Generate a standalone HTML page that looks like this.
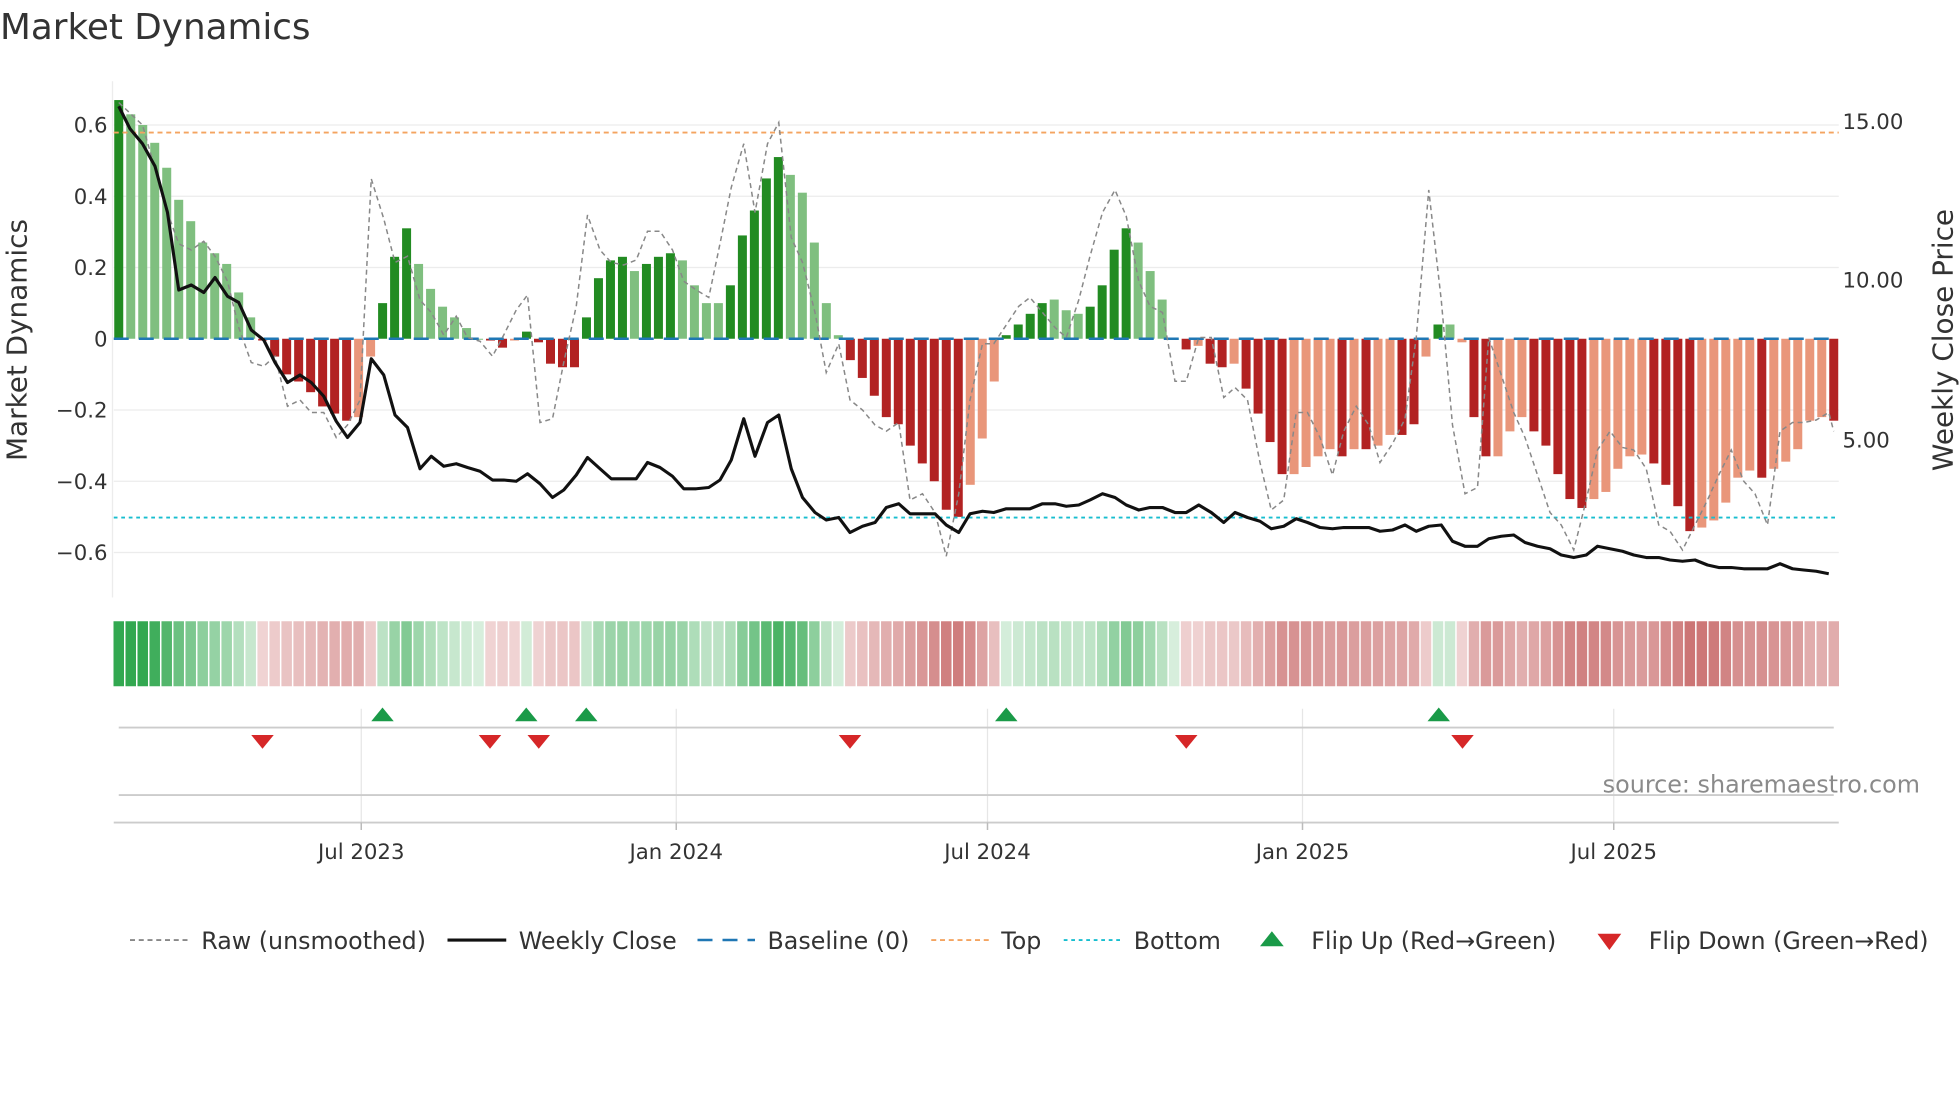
<!DOCTYPE html>
<html><head><meta charset="utf-8"><style>
html,body{margin:0;padding:0;background:#fff;}
svg{display:block;font-family:"DejaVu Sans","Liberation Sans",sans-serif;}
</style></head><body>
<svg id="s" width="1960" height="1102" viewBox="0 0 1568 881.6" xmlns="http://www.w3.org/2000/svg">
<rect width="1568" height="882" fill="#fff"/>
<text x="0" y="31" font-size="28.6" fill="#333">Market Dynamics</text>
<g stroke="#ececec" stroke-width="1">
<line x1="91" y1="100" x2="1471" y2="100"/><line x1="91" y1="157" x2="1471" y2="157"/>
<line x1="91" y1="214" x2="1471" y2="214"/><line x1="91" y1="328" x2="1471" y2="328"/>
<line x1="91" y1="385" x2="1471" y2="385"/><line x1="91" y1="442" x2="1471" y2="442"/>
<line x1="90" y1="65" x2="90" y2="478"/>
</g>
<g font-size="17" fill="#333" text-anchor="end">
<text x="86" y="106">0.6</text><text x="86" y="163">0.4</text><text x="86" y="220">0.2</text>
<text x="86" y="277">0</text><text x="86" y="334">−0.2</text><text x="86" y="391">−0.4</text><text x="86" y="448">−0.6</text>
</g>
<g font-size="17" fill="#333">
<text x="1474" y="103">15.00</text><text x="1474" y="230">10.00</text><text x="1474" y="358">5.00</text>
</g>
<text transform="translate(21,272) rotate(-90)" font-size="22.3" fill="#333" text-anchor="middle">Market Dynamics</text>
<text transform="translate(1562,272) rotate(-90)" font-size="22.3" fill="#333" text-anchor="middle">Weekly Close Price</text>
<g id="bars"></g>
<line x1="91" y1="271" x2="1471" y2="271" stroke="#1f77b4" stroke-width="2" stroke-dasharray="12,8"/>
<line x1="91" y1="106" x2="1471" y2="106" stroke="#f4a460" stroke-width="1.5" stroke-dasharray="4,3"/>
<line x1="91" y1="414" x2="1471" y2="414" stroke="#17becf" stroke-width="1.5" stroke-dasharray="3,3"/>
<polyline id="raw" fill="none" stroke="#888" stroke-width="1.2" stroke-dasharray="4,3"/>
<polyline id="close" fill="none" stroke="#111" stroke-width="2.5" stroke-linejoin="round"/>
<g id="heat"></g>
<g stroke="#e6e6e6" stroke-width="1">
<line x1="289" y1="567" x2="289" y2="658"/><line x1="541" y1="567" x2="541" y2="658"/>
<line x1="790" y1="567" x2="790" y2="658"/><line x1="1042" y1="567" x2="1042" y2="658"/>
<line x1="1291" y1="567" x2="1291" y2="658"/>
</g>
<line x1="95" y1="582" x2="1467" y2="582" stroke="#ccc" stroke-width="1.5"/>
<line x1="95" y1="636" x2="1467" y2="636" stroke="#ccc" stroke-width="1.5"/>
<line x1="91" y1="658" x2="1471" y2="658" stroke="#ccc" stroke-width="1.5"/>
<g stroke="#bbb" stroke-width="1.2">
<line x1="289" y1="658" x2="289" y2="664"/><line x1="541" y1="658" x2="541" y2="664"/>
<line x1="790" y1="658" x2="790" y2="664"/><line x1="1042" y1="658" x2="1042" y2="664"/>
<line x1="1291" y1="658" x2="1291" y2="664"/>
</g>
<g id="flips"></g>
<g font-size="17" fill="#333" text-anchor="middle">
<text x="289" y="687">Jul 2023</text><text x="541" y="687">Jan 2024</text><text x="790" y="687">Jul 2024</text>
<text x="1042" y="687">Jan 2025</text><text x="1291" y="687">Jul 2025</text>
</g>
<text x="1536" y="634" font-size="19.1" fill="#8a8a8a" text-anchor="end">source: sharemaestro.com</text>
<g font-size="19" fill="#333">
<line x1="104" y1="752" x2="150" y2="752" stroke="#888" stroke-width="1.5" stroke-dasharray="4,3"/>
<text x="161" y="759">Raw (unsmoothed)</text>
<line x1="358" y1="752" x2="405" y2="752" stroke="#111" stroke-width="2.5"/>
<text x="415" y="759">Weekly Close</text>
<line x1="558" y1="752" x2="604" y2="752" stroke="#1f77b4" stroke-width="2" stroke-dasharray="12,8"/>
<text x="614" y="759">Baseline (0)</text>
<line x1="745" y1="752" x2="791" y2="752" stroke="#f4a460" stroke-width="1.5" stroke-dasharray="4,3"/>
<text x="801" y="759">Top</text>
<line x1="851" y1="752" x2="897" y2="752" stroke="#17becf" stroke-width="1.5" stroke-dasharray="3,3"/>
<text x="907" y="759">Bottom</text>
<polygon points="1008,757 1027,757 1017.5,745" fill="#1a9a48"/>
<text x="1049" y="759">Flip Up (Red→Green)</text>
<polygon points="1278,747 1297,747 1287.5,760" fill="#d62728"/>
<text x="1319" y="759">Flip Down (Green→Red)</text>
</g>
</svg>
<script>
var NS="http://www.w3.org/2000/svg";
function el(t,a,p){var e=document.createElementNS(NS,t);for(var k in a)e.setAttribute(k,a[k]);p.appendChild(e);return e;}
var d=[[.67,'G'],[.63,'g'],[.60,'g'],[.55,'g'],[.48,'g'],[.39,'g'],[.33,'g'],[.27,'g'],[.24,'g'],[.21,'g'],[.13,'g'],[.06,'g'],[-.005,'R'],
[-.05,'R'],[-.10,'R'],[-.12,'R'],[-.15,'R'],[-.19,'R'],[-.21,'R'],[-.23,'R'],[-.22,'r'],[-.05,'r'],[.10,'G'],[.23,'G'],[.31,'G'],[.21,'g'],[.14,'g'],[.09,'g'],[.06,'g'],[.03,'g'],[0,'g'],
[-.005,'R'],[-.025,'R'],[-.005,'r'],[.02,'G'],[-.01,'R'],[-.07,'R'],[-.08,'R'],[-.08,'R'],[.06,'G'],[.17,'G'],[.22,'G'],[.23,'G'],[.19,'g'],[.21,'G'],[.23,'G'],[.24,'G'],[.22,'g'],[.15,'g'],[.10,'g'],[.10,'g'],[.15,'G'],[.29,'G'],[.36,'G'],[.45,'G'],[.51,'G'],[.46,'g'],[.41,'g'],[.27,'g'],[.10,'g'],[.01,'g'],
[-.06,'R'],[-.11,'R'],[-.16,'R'],[-.22,'R'],[-.24,'R'],[-.30,'R'],[-.35,'R'],[-.40,'R'],[-.48,'R'],[-.50,'R'],[-.41,'r'],[-.28,'r'],[-.12,'r'],
[.01,'G'],[.04,'G'],[.07,'G'],[.10,'G'],[.11,'g'],[.08,'g'],[.07,'g'],[.09,'G'],[.15,'G'],[.25,'G'],[.31,'G'],[.27,'g'],[.19,'g'],[.11,'g'],[0,'g'],
[-.03,'R'],[-.02,'r'],[-.07,'R'],[-.08,'R'],[-.07,'r'],[-.14,'R'],[-.21,'R'],[-.29,'R'],[-.38,'R'],[-.38,'r'],[-.36,'r'],[-.33,'r'],[-.31,'r'],[-.33,'R'],[-.31,'r'],[-.31,'R'],[-.30,'r'],[-.27,'r'],[-.27,'R'],[-.24,'R'],[-.05,'r'],[.04,'G'],[.04,'g'],
[-.01,'r'],[-.22,'R'],[-.33,'R'],[-.33,'r'],[-.26,'r'],[-.22,'r'],[-.26,'R'],[-.30,'R'],[-.38,'R'],[-.45,'R'],[-.475,'R'],[-.45,'r'],[-.43,'r'],[-.365,'r'],[-.33,'r'],[-.325,'r'],[-.35,'R'],[-.41,'R'],[-.47,'R'],[-.54,'R'],[-.53,'r'],[-.51,'r'],[-.46,'r'],[-.39,'r'],[-.37,'r'],[-.39,'R'],[-.365,'r'],[-.345,'r'],[-.31,'r'],[-.23,'r'],[-.22,'r'],[-.23,'R']];
var N=d.length,x0=95,x1=1467,st=(x1-x0)/(N-1),cols={G:'#228b22',g:'#7fbf7f',R:'#b22222',r:'#e9967a'};
var bars=document.getElementById('bars'),heat=document.getElementById('heat');
for(var i=0;i<N;i++){var v=d[i][0],x=x0+i*st,y0=271,h=v*285;
 el('rect',{x:x-3.6,y:h>=0?y0-h:y0,width:7.2,height:Math.max(Math.abs(h),0.8),fill:cols[d[i][1]]},bars);
 var a=Math.min(1,Math.abs(v)/0.6),c;
 if(v>=0){c='rgb('+Math.round(215-165*a)+','+Math.round(238-70*a)+','+Math.round(220-140*a)+')';}
 else{c='rgb('+Math.round(240-40*a)+','+Math.round(212-105*a)+','+Math.round(212-105*a)+')';}
 el('rect',{x:x-st/2+0.6,y:497,width:st-1.2,height:52,fill:c},heat);}
var cl=[[95,85],[104,103],[114,115],[124,133],[134,170],[143,232],[153,228],[163,234],[172,222],[182,237],[191,242],[201,264],[211,272],[220,290],[230,306],[240,300],[249,306],[259,317],[269,337],[278,350],[288,338],[297,287],[307,300],[316,332],[326,342],[336,375],[345,365],[355,373],[365,371],[374,374],[384,377],[394,384],[403,384],[413,385],[422,379],[432,387],[442,398],[451,392],[461,380],[470,366],[480,375],[489,383],[499,383],[509,383],[518,370],[528,374],[538,381],[547,391],[557,391],[567,390],[576,384],[585,368],[595,335],[604,365],[614,338],[623,332],[633,375],[642,398],[652,410],[661,416],[671,414],[680,426],[690,421],[700,418],[709,406],[719,403],[728,411],[738,411],[748,411],[757,420],[767,426],[776,411],[786,409],[795,410],[805,407],[815,407],[824,407],[834,403],[844,403],[853,405],[863,404],[872,400],[882,395],[892,398],[901,404],[911,408],[920,406],[930,406],[940,410],[949,410],[959,404],[969,410],[979,418],[988,410],[998,414],[1008,417],[1017,423],[1027,421],[1037,415],[1046,418],[1056,422],[1066,423],[1075,422],[1085,422],[1095,422],[1104,425],[1114,424],[1124,420],[1133,425],[1143,421],[1153,420],[1162,433],[1172,437],[1182,437],[1191,431],[1201,429],[1211,428],[1220,434],[1230,437],[1240,439],[1249,444],[1259,446],[1269,444],[1278,437],[1288,439],[1298,441],[1307,444],[1317,446],[1327,446],[1336,448],[1346,449],[1356,448],[1366,452],[1375,454],[1385,454],[1395,455],[1404,455],[1414,455],[1424,451],[1434,455],[1443,456],[1453,457],[1463,459]];
document.getElementById('close').setAttribute('points',cl.map(function(p){return p.join(',')}).join(' '));
var rw=[[95,82],[114,100],[134,170],[143,195],[153,200],[163,193],[172,205],[182,225],[191,262],[201,290],[211,293],[220,285],[230,325],[240,320],[249,330],[259,330],[269,350],[278,340],[288,320],[297,143],[307,175],[316,210],[326,205],[336,240],[345,250],[355,268],[365,253],[374,270],[384,273],[394,285],[403,268],[413,248],[422,236],[432,338],[442,335],[451,290],[461,245],[470,172],[480,200],[489,210],[499,212],[509,208],[518,185],[528,185],[538,200],[547,225],[557,232],[567,238],[576,195],[585,150],[595,115],[604,170],[614,115],[623,98],[633,190],[642,210],[652,250],[661,298],[671,275],[680,320],[690,328],[700,340],[709,345],[719,338],[728,400],[738,395],[748,410],[757,445],[767,395],[776,320],[786,275],[795,275],[805,260],[815,245],[824,238],[834,250],[844,262],[853,270],[863,240],[872,205],[882,170],[892,152],[901,173],[911,225],[920,245],[930,250],[940,305],[949,305],[959,270],[969,270],[979,318],[988,310],[998,320],[1008,370],[1017,408],[1027,400],[1037,330],[1046,330],[1056,350],[1066,380],[1075,345],[1085,325],[1095,340],[1104,370],[1114,355],[1124,335],[1133,270],[1143,152],[1153,240],[1162,340],[1172,395],[1182,390],[1191,270],[1201,300],[1211,330],[1220,350],[1230,380],[1240,410],[1249,420],[1259,440],[1269,400],[1278,360],[1288,345],[1298,358],[1307,360],[1317,375],[1327,420],[1336,425],[1346,440],[1356,420],[1366,400],[1375,380],[1385,360],[1395,385],[1404,395],[1414,420],[1424,345],[1434,338],[1443,338],[1453,336],[1463,330],[1467,345]];
document.getElementById('raw').setAttribute('points',rw.map(function(p){return p.join(',')}).join(' '));
var fl=document.getElementById('flips');
[306,421,469,805,1151].forEach(function(x){el('polygon',{points:(x-9)+',577 '+(x+9)+',577 '+x+',566',fill:'#1a9a48'},fl);});
[210,392,431,680,949,1170].forEach(function(x){el('polygon',{points:(x-9)+',588 '+(x+9)+',588 '+x+',599',fill:'#d62728'},fl);});
</script>
</body></html>
